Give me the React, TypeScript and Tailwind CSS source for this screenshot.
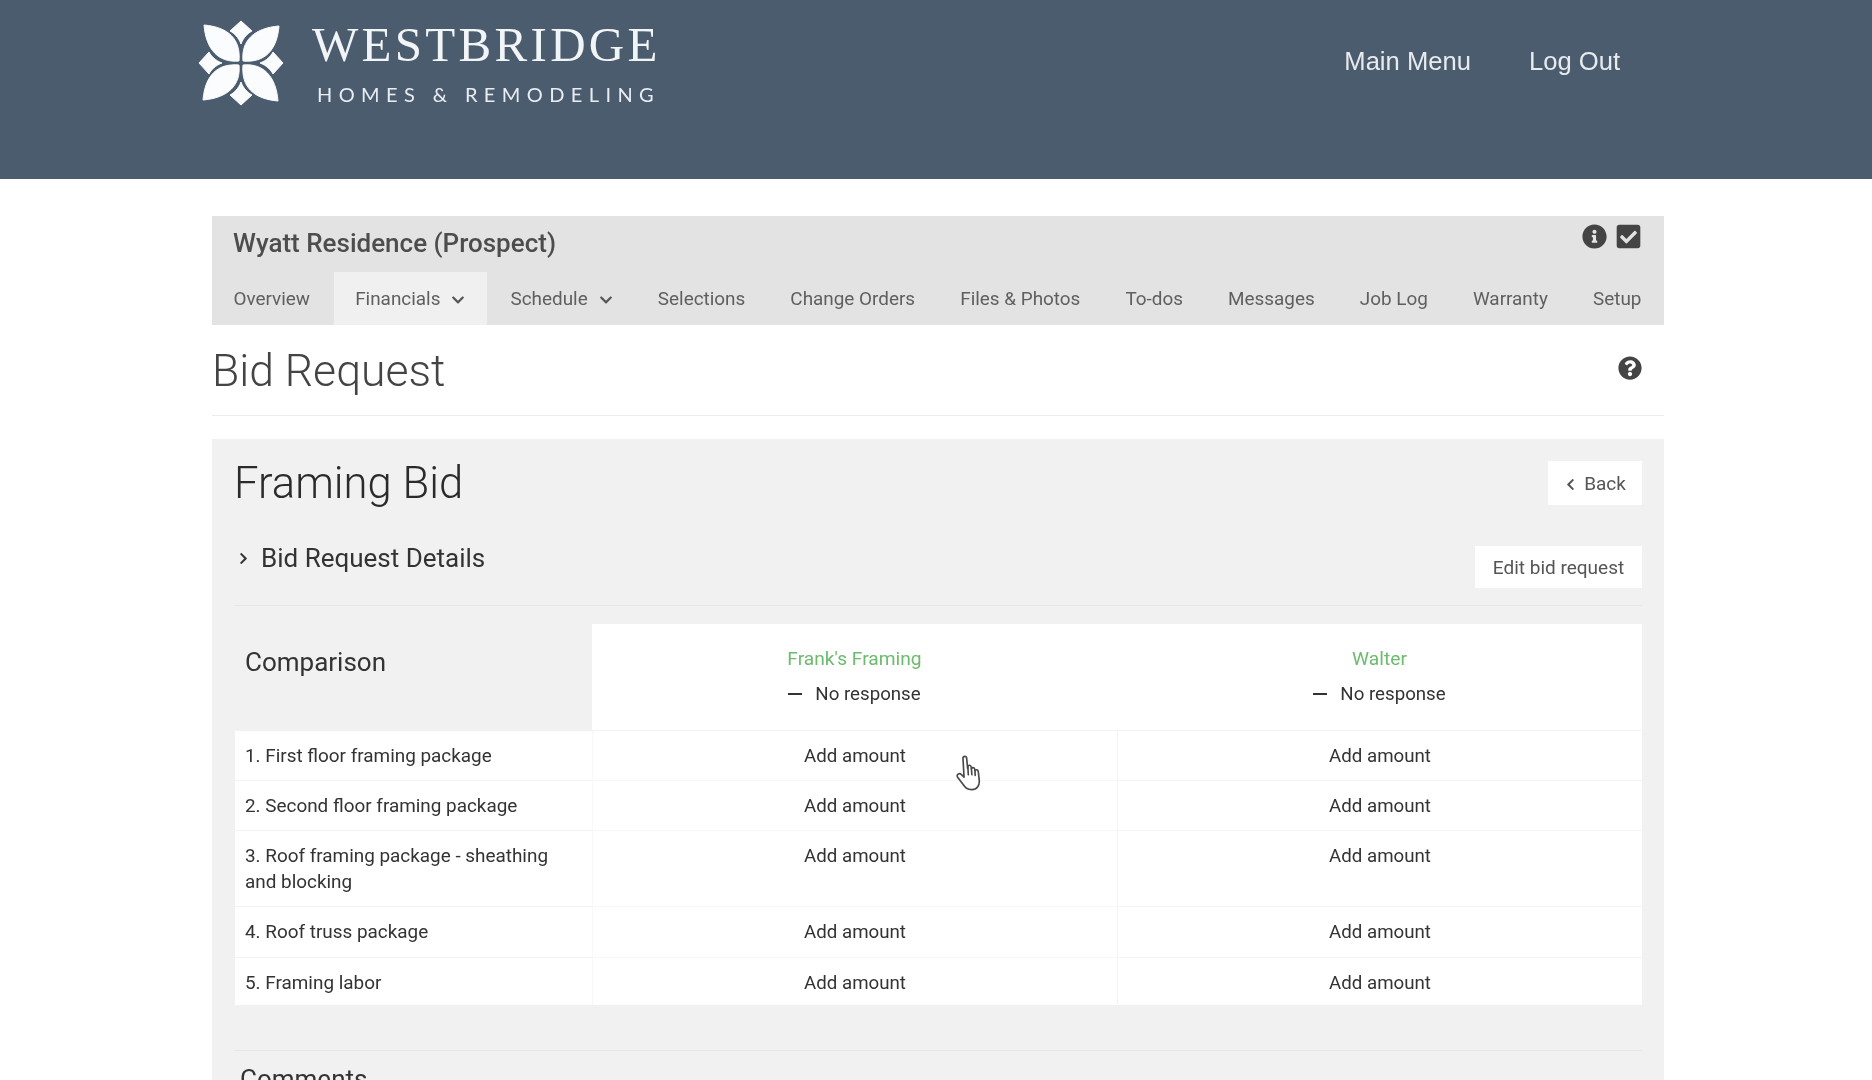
import { FaInfoCircle, FaCheckSquare, FaQuestionCircle, FaChevronDown, FaChevronLeft, FaChevronRight } from "react-icons/fa";

const tabs = [
  { label: "Overview" },
  { label: "Financials", caret: true, active: true },
  { label: "Schedule", caret: true },
  { label: "Selections" },
  { label: "Change Orders" },
  { label: "Files & Photos" },
  { label: "To-dos" },
  { label: "Messages" },
  { label: "Job Log" },
  { label: "Warranty" },
  { label: "Setup" },
];

const rows = [
  { label: "1. First floor framing package", h: "h-[50px]" },
  { label: "2. Second floor framing package", h: "h-[50px]" },
  { label: "3. Roof framing package - sheathing and blocking", h: "h-[76px]" },
  { label: "4. Roof truss package", h: "h-[51px]" },
  { label: "5. Framing labor", h: "h-[47px]" },
];

function Logo() {
  const petal = "M2 -2 C0 -22 13 -35 38 -37 C36 -13 24 0 2 -2 Z";
  const diamond = "M0 -42 L11 -32 C7 -30 2 -25 0 -19 C-2 -25 -7 -30 -11 -32 Z";
  return (
    <svg viewBox="-44 -44 88 88" className="w-[88px] h-[88px] shrink-0" fill="#fbfcfd" stroke="#fbfcfd" strokeWidth="1" strokeLinejoin="round">
      {[0, 90, 180, 270].map((r) => (
        <g key={r} transform={`rotate(${r})`}>
          <path d={petal} />
          <path d={diamond} />
        </g>
      ))}
    </svg>
  );
}

function Hand() {
  return (
    <svg viewBox="0 0 24 32" className="absolute left-[955px] top-[754px] w-[29px] h-[38px]" fill="#ffffff" stroke="#4a4a4a" strokeWidth="1.4" strokeLinejoin="round" strokeLinecap="round">
      <path d="M6.5 3.5 C6.5 1.5 9.5 1.5 9.6 3.5 L10.4 12 L10.6 10.5 C11 9 13.2 9.2 13.4 10.8 L13.6 12.4 C14 11 16.2 11.2 16.4 12.8 L16.6 14 C17.2 12.8 19.2 13.2 19.4 14.8 L20.2 22 C20.6 26 18.5 30 14 30 C10 30 8.5 28.5 6.5 25.5 L2 19.5 C0.8 17.5 3.2 15.6 5 17.2 L7.4 19.5 Z" />
      <path d="M13.6 12.4 L14 17.5 M16.6 14 L16.8 18 M10.6 10.5 L11 17.5" />
    </svg>
  );
}

export default function App() {
  return (
    <div className="relative h-[1080px] overflow-hidden bg-white font-['Roboto',sans-serif] text-[#444] blur-[0.4px]">
      <header className="h-[179px] bg-[#4c5c6f] flex items-start pl-[197px] pr-[252px] pt-[19px]">
        <Logo />
        <div className="ml-[27px] mt-[1px]">
          <div className="font-['Liberation_Serif',serif] text-[49px] leading-[50px] tracking-[3.3px] text-[#f2f5f8] whitespace-nowrap">WESTBRIDGE</div>
          <div className="font-['Lato',sans-serif] text-[20px] leading-[24px] mt-[12px] ml-[5px] tracking-[6.4px] text-[#e8edf1] whitespace-nowrap">HOMES &amp; REMODELING</div>
        </div>
        <nav className="ml-auto flex gap-[58px] pt-[26px] font-['Liberation_Sans',sans-serif] text-[25.6px] leading-[32px] text-[#e8ebee]">
          <span>Main Menu</span>
          <span>Log Out</span>
        </nav>
      </header>

      <main className="ml-[212px] w-[1452px] pt-[37px]">
        <section className="bg-[#e3e3e3]">
          <div className="h-[56px] flex justify-between pl-[21px] pr-[22px]">
            <h2 className="text-[26px] font-medium leading-[54px] text-[#4d4d4d]">Wyatt Residence (Prospect)</h2>
            <div className="flex items-center gap-[8px] h-[40px] text-[#444]">
              <FaInfoCircle className="text-[25px]" />
              <FaCheckSquare className="text-[27px]" />
            </div>
          </div>
          <nav className="h-[53px] flex justify-between pr-[1px] text-[18.9px] text-[#5f5f5f]">
            {tabs.map((t) => (
              <div key={t.label} className={`flex items-center gap-[11px] px-[21.5px] pt-[2px] ${t.active ? "bg-[#f0f0f0]" : ""}`}>
                {t.label}
                {t.caret && <FaChevronDown className="text-[14px] text-[#555]" />}
              </div>
            ))}
          </nav>
        </section>

        <div className="h-[91px] flex items-center justify-between border-b border-[#ececec] pr-[22px]">
          <h1 className="text-[44.5px] leading-[50px] font-light text-[#444] mt-[2px]">Bid Request</h1>
          <FaQuestionCircle className="text-[24px] text-[#444] mb-[4px]" />
        </div>

        <section className="mt-[23px] bg-[#f1f1f1] pl-[23px] pr-[22px] pt-[22px]">
          <div className="flex items-center justify-between h-[44px]">
            <h2 className="text-[43.6px] font-light text-[#2b2b2b] leading-[44px] -ml-[1px] pt-[2px]">Framing Bid</h2>
            <button className="h-[44px] w-[94px] bg-white flex items-center justify-center gap-[7px] pt-[2px] text-[19px] text-[#555]">
              <FaChevronLeft className="text-[13px]" />
              Back
            </button>
          </div>

          <div className="mt-[41px] flex items-start justify-between h-[60px] border-b border-[#e6e6e6]">
            <div className="flex items-center gap-[11px] pl-[2px] -mt-[6px] h-[36px]">
              <FaChevronRight className="text-[13px] text-[#333]" />
              <span className="text-[26px] text-[#333]">Bid Request Details</span>
            </div>
            <button className="h-[42px] w-[167px] bg-white pt-[2px] text-[19px] text-[#555]">Edit bid request</button>
          </div>

          <div className="mt-[18px] grid grid-cols-[357px_1fr_1fr]">
            <div className="h-[107px] pl-[10px] pt-[22px] text-[26px] leading-[32px] text-[#333]">Comparison</div>
            {["Frank's Framing", "Walter"].map((name) => (
              <div key={name} className="h-[107px] bg-white border-b border-[#f3f3f3] flex flex-col items-center pt-[21px]">
                <div className="text-[19.2px] leading-[28px] text-[#6dbb6d]">{name}</div>
                <div className="mt-[7px] flex items-center gap-[13px] text-[18.7px] leading-[28px] text-[#333]">
                  <span className="w-[14px] h-[2px] bg-[#333]" />
                  No response
                </div>
              </div>
            ))}
            {rows.map((r, i) => (
              <div key={r.label} className="contents">
                <div className={`${r.h} bg-white pl-[10px] pr-[36px] pt-[12px] text-[18.9px] leading-[26px] text-[#333] ${i < 4 ? "border-b border-[#f3f3f3]" : ""}`}>{r.label}</div>
                <div className={`${r.h} bg-white border-l border-[#f8f8f8] text-center pt-[12px] text-[18.7px] leading-[26px] text-[#333] ${i < 4 ? "border-b border-[#f3f3f3]" : ""}`}>Add amount</div>
                <div className={`${r.h} bg-white border-l border-[#f4f4f4] text-center pt-[12px] text-[18.7px] leading-[26px] text-[#333] ${i < 4 ? "border-b border-[#f3f3f3]" : ""}`}>Add amount</div>
              </div>
            ))}
          </div>

          <div className="mt-[45px] border-t border-[#e6e6e6] pt-[12px] pl-[5px] text-[26px] leading-[32px] text-[#333]">Comments</div>
        </section>
      </main>
      <Hand />
    </div>
  );
}
